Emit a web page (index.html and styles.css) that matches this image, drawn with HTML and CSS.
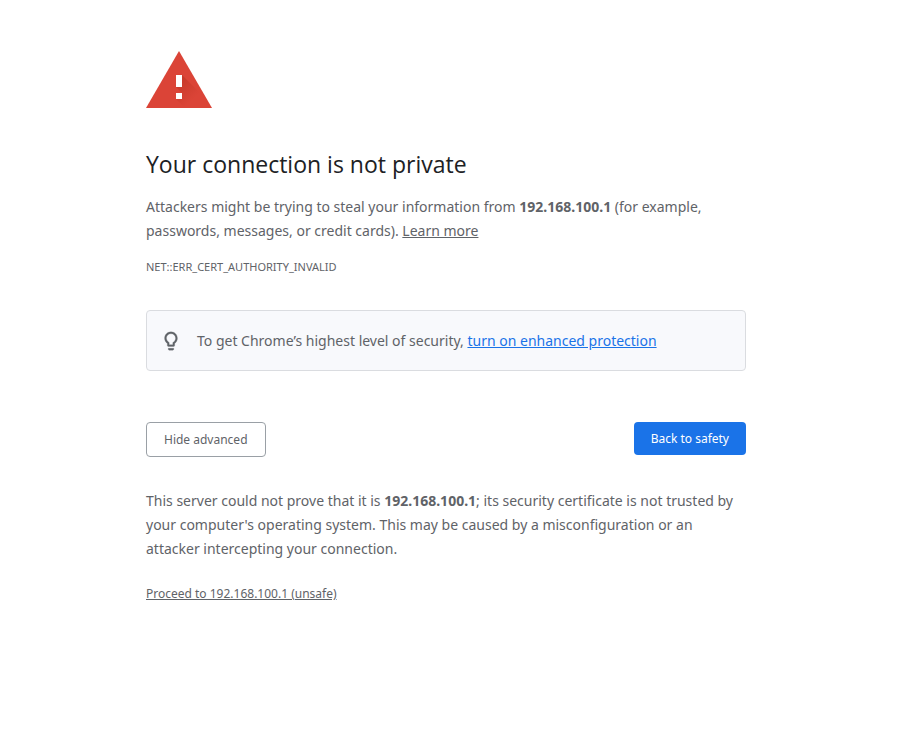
FILE: index.html
```html
<!DOCTYPE html>
<html lang="en">
<head>
    <meta charset="utf-8">
    <meta name="viewport" content="width=device-width, initial-scale=1">
    <title>Privacy error</title>
    <link rel="stylesheet" href="styles.css">
</head>
<body>
    <main class="interstitial">
        <svg class="warning" viewBox="0 0 66 57" aria-hidden="true">
            <defs>
                <linearGradient id="shade" x1="33" y1="27" x2="50" y2="45" gradientUnits="userSpaceOnUse">
                    <stop offset="0" stop-color="#a52714" stop-opacity=".4"/>
                    <stop offset="1" stop-color="#a52714" stop-opacity="0"/>
                </linearGradient>
            </defs>
            <path fill="#db4437" d="M33 0 66 57H0Z"/>
            <path fill="url(#shade)" d="m36 24 17 17 9 16H39l-9-9 6-6-6-6z"/>
            <path fill="#fff" d="M30 24h6v12h-6zM30 42h6v6h-6z"/>
        </svg>

        <h1>Your connection is not private</h1>
        <p>Attackers might be trying to steal your information from <strong>192.168.100.1</strong> (for example, passwords, messages, or credit cards). <a href="#">Learn more</a></p>
        <div class="error_code">NET::ERR_CERT_AUTHORITY_INVALID</div>

        <div class="promo">
            <svg class="bulb" viewBox="0 0 24 24" aria-hidden="true">
                <path fill="#5f6368" stroke="#5f6368" stroke-width=".3" d="M9 21c0 .55.45 1 1 1h4c.55 0 1-.45 1-1v-1H9v1zm3-19C8.14 2 5 5.14 5 9c0 2.38 1.19 4.47 3 5.74V17c0 .55.45 1 1 1h6c.55 0 1-.45 1-1v-2.26c1.81-1.27 3-3.36 3-5.74 0-3.86-3.14-7-7-7zm2.85 11.1-.85.6V16h-4v-2.3l-.85-.6A4.997 4.997 0 0 1 7 9c0-2.76 2.24-5 5-5s5 2.24 5 5c0 1.63-.8 3.16-2.15 4.1z"/>
            </svg>
            <span>To get Chrome’s highest level of security, <a class="promo_link" href="#">turn on enhanced protection</a></span>
        </div>

        <div class="buttons">
            <button class="details_button" type="button">Hide advanced</button>
            <button class="primary_button" type="button">Back to safety</button>
        </div>

        <div class="details">
            <p>This server could not prove that it is <strong>192.168.100.1</strong>; its security certificate is not trusted by your computer's operating system. This may be caused by a misconfiguration or an attacker intercepting your connection.</p>
            <a class="proceed" href="#">Proceed to 192.168.100.1 (unsafe)</a>
        </div>
    </main>
</body>
</html>
```
FILE: styles.css
```css
*{
    box-sizing: border-box;
}

body{
    margin: 0;
    padding: 51px 29px 24px 24px;
    background-color: #fff;
    color: #5f6368;
    font-family: "Noto Sans", "Open Sans", sans-serif;
    font-size: 14px;
    line-height: 24px;
}

.interstitial{
    max-width: 600px;
    margin: 0 auto;
}

.warning{
    display: block;
    width: 66px;
    height: 57px;
}

h1{
    margin: 40px 0 15px;
    color: #202124;
    font-family: "Open Sans", "Noto Sans", sans-serif;
    font-size: 23px;
    font-weight: 400;
    line-height: 32px;
}

p{
    margin: 0;
}

a{
    color: inherit;
}

.error_code{
    margin-top: 12px;
    font-size: 11px;
}

.promo{
    display: flex;
    align-items: center;
    gap: 15px;
    margin-top: 31px;
    padding: 18px 13px 17px;
    border: 1px solid #dadce0;
    border-radius: 4px;
    background-color: #f8f9fc;
}

.bulb{
    flex: none;
    width: 22px;
    height: 22px;
}

.promo_link{
    color: #1a73e8;
}

.buttons{
    display: flex;
    justify-content: space-between;
    align-items: flex-start;
    margin-top: 51px;
}

button{
    padding: 8px 17px;
    border-radius: 4px;
    font-family: inherit;
    font-size: 12px;
    line-height: 17px;
    cursor: pointer;
}

.details_button{
    border: 1px solid #9aa0a6;
    background-color: #fff;
    color: #5f6368;
}

.primary_button{
    border: none;
    background-color: #1a73e8;
    color: #fff;
}

.details{
    margin-top: 32px;
}

.proceed{
    display: inline-block;
    margin-top: 21px;
    font-size: 12px;
}
```
